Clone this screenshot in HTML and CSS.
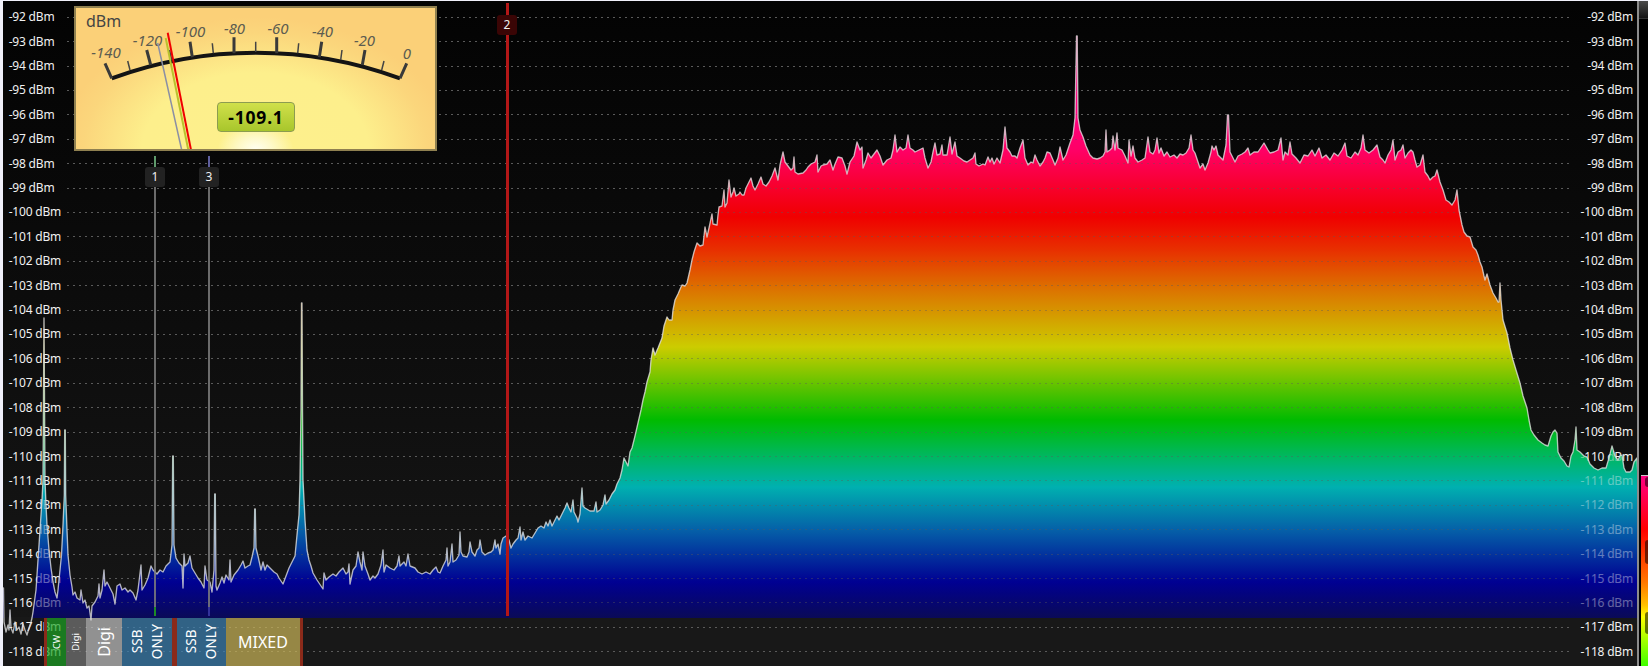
FILE: index.html
```html
<!DOCTYPE html>
<html lang="en">
<head>
<meta charset="utf-8">
<title>Spectrum</title>
<link rel="stylesheet" href="styles.css">
</head>
<body>
<div class="app">
  <main class="plot">
    <svg class="layer" viewBox="3 1 1634 665" aria-hidden="true">
      <defs>
        <linearGradient id="spectrumGradient" gradientUnits="userSpaceOnUse" x1="0" y1="0" x2="0" y2="1000">
          <stop offset="0.115" stop-color="#ff0080"/>
          <stop offset="0.150" stop-color="#ff0066"/>
          <stop offset="0.185" stop-color="#f80030"/>
          <stop offset="0.217" stop-color="#f00000"/>
          <stop offset="0.250" stop-color="#e83000"/>
          <stop offset="0.290" stop-color="#dc7400"/>
          <stop offset="0.347" stop-color="#cccc00"/>
          <stop offset="0.420" stop-color="#00bb00"/>
          <stop offset="0.450" stop-color="#00b850"/>
          <stop offset="0.487" stop-color="#00b0b0"/>
          <stop offset="0.530" stop-color="#0560a8"/>
          <stop offset="0.582" stop-color="#000092"/>
          <stop offset="0.6175" stop-color="#0a0a58"/>
          <stop offset="0.6175" stop-color="#0a0a58" stop-opacity="0"/>
        </linearGradient>
        <polygon id="spectrum" points="3.5,588 4,622 6,632 8,625 9,630 10,610 11,628 13,633 15,622 17,630 19,627 21,634 23,624 25,630 27,635 29,628 31,622 32,618 33,612 36,590 38,560 40,530 42,500 43,480 43.6,380 44,318 44.4,380 45,480 46,505 47,525 49,550 51,568 53,582 55,592 57,598 58,590 60,570 61.5,555 63,525 64.3,495 64.7,430 65.3,430 65.7,495 67,530 68,555 70,575 72,587 73,595 75,592 77,598 80,600 81,590 83,603 85,600 87,608 89,606 91,620 92,606 95,602 98,596 99,584 100,598 102,590 104,570 105,586 107,582 110,588 113,594 115,604 117,586 120,584 122,590 125,588 128,592 130,590 133,593 136,600 138,590 141,565 142,590 145,585 148,578 151,566 153,570 157,574 160,570 163,572 166,566 170,562 172,545 172.7,456 173.3,456 174,545 176,558 179,563 182,566 183,588 184,554 185,566 188,563 190,556 192,568 195,573 198,578 201,582 204,588 205,566 207,580 210,582 212,592 214,570 214.7,494 215.3,494 216,586 217,590 220,583 222,577 224,583 226,575 229,580 230,560 231,582 234,575 238,570 241,565 243,561 245,568 248,566 250,565 252,557 254,548 254.7,509 255.3,509 256,548 258,556 261,570 263,562 265,570 267,565 270,568 274,572 277,574 279,578 283,584 286,576 289,568 292,562 295,556 297,535 299,515 300,480 301,410 301.5,303 302,303 302.5,410 303,480 305,520 306,535 307,550 309,560 311,566 313,573 317,580 321,586 323,589 324,573 326,580 329,577 333,574 336,576 339,572 341,570 343,568 346,574 348,572 349,564 350,584 353,570 356,566 358,552 360,562 362,570 363,552 365,566 368,574 370,580 373,576 375,578 378,574 381,565 383,550 384,572 386,565 390,568 394,570 397,566 399,556 400,566 404,562 406,566 408,554 410,566 415,568 418,572 422,574 426,572 430,574 433,570 436,567 438,572 440,573 443,566 446,560 447,548 448,566 450,562 452,544 453,562 456,560 459,555 460,532 461,552 463,556 467,557 469,552 470,542 472,552 475,556 477,550 479,548 480,540 482,552 485,555 488,553 491,552 493,550 495,540 496,548 498,544 500,554 501,544 503,538 506,536 509,540 511,548 513,544 516,540 518,538 520,527 521,540 523,532 525,540 528,536 532,538 535,533 538,528 541,526 544,528 546,522 548,526 550,520 552,526 555,520 557,516 559,520 562,514 565,508 567,503 569,508 571,512 573,500 574,512 577,518 578,522 580,514 582,488 583,506 585,508 590,511 594,511 596,502 597,512 600,510 603,505 605,495 606,504 609,500 612,494 615,490 617,484 620,478 622,470 624,458 626,462 628,466 630,452 632,448 635,436 638,423 641,410 643,400 645,392 647,382 650,372 651,360 653,348 655,355 658,348 662,338 664,326 667,317 669,320 672,320 673,310 675,300 678,294 681,287 682,285 685,286 687,283 690,270 692,260 694,252 697,243 700,246 703,245 705,227 707,237 709,228 712,214 713,224 717,225 718,215 719,207 722,206 724,190 725,207 727,203 729,180 731,197 733,192 734,188 736,196 739,194 740,192 742,195 744,195 746,188 748,184 751,178 753,186 755,190 758,184 761,177 763,184 766,186 769,182 772,176 775,168 778,180 780,165 783,152 785,162 788,166 791,170 793,168 794,157 795,172 798,174 803,173 806,170 808,167 811,164 815,162 817,155 818,172 821,166 823,165 827,164 830,160 833,170 835,164 838,157 842,158 845,166 847,174 850,162 854,156 857,142 860,150 862,147 863,168 866,160 868,153 871,158 874,154 877,150 880,156 883,165 887,160 891,158 893,150 895,135 897,152 900,147 903,150 906,148 908,135 910,148 913,150 915,152 919,150 923,148 925,158 928,168 931,162 933,152 935,143 937,155 940,154 942,145 943,155 947,155 950,137 952,154 955,142 957,156 960,158 964,161 967,162 970,160 973,158 975,153 976,164 979,166 983,164 985,165 988,157 990,162 992,158 994,164 997,158 1000,163 1003,150 1005,127 1007,148 1010,152 1012,156 1015,156 1017,158 1020,148 1023,140 1025,158 1028,165 1031,162 1033,163 1035,155 1037,160 1040,166 1043,162 1045,158 1047,152 1050,153 1053,160 1055,165 1058,158 1060,147 1063,160 1066,155 1070,143 1073,135 1075,118 1076.5,36 1077.2,36 1078,118 1080,130 1083,137 1086,146 1090,155 1093,158 1097,159 1100,158 1103,156 1105,152 1106,130 1107,152 1110,150 1112,148 1113,136 1115,150 1117,133 1118,148 1122,150 1125,156 1128,163 1129,140 1131,156 1133,146 1135,158 1138,162 1142,160 1145,158 1148,137 1150,152 1153,154 1155,150 1157,138 1159,153 1161,148 1164,156 1167,152 1170,157 1174,155 1177,158 1180,154 1183,155 1186,153 1189,148 1191,135 1193,150 1195,153 1198,162 1200,168 1203,164 1205,170 1208,163 1211,152 1212,146 1214,150 1216,146 1218,155 1223,160 1226,145 1227.5,115 1228.5,115 1230,152 1233,158 1235,162 1238,156 1242,154 1245,152 1248,148 1250,155 1254,152 1258,152 1262,146 1264,143 1268,150 1270,153 1274,152 1278,150 1281,138 1283,160 1285,152 1288,155 1290,142 1292,154 1296,158 1300,163 1304,155 1308,156 1312,150 1315,156 1319,148 1322,158 1326,155 1330,160 1334,153 1338,156 1342,150 1345,143 1347,156 1351,158 1355,152 1358,155 1361,148 1363,135 1365,150 1369,153 1373,150 1377,145 1380,157 1383,160 1385,163 1388,155 1391,150 1393,140 1395,160 1398,152 1401,150 1403,145 1405,158 1408,153 1411,150 1413,152 1415,160 1417,167 1420,165 1423,155 1425,172 1428,176 1430,180 1433,177 1435,176 1437,170 1440,182 1443,190 1446,200 1449,202 1452,205 1455,200 1457,190 1459,210 1462,225 1464,232 1467,236 1470,237 1473,247 1476,250 1478,255 1480,262 1482,267 1484,276 1485,280 1487,274 1490,285 1493,293 1496,298 1498,302 1499,302 1500,283 1501,300 1503,320 1507,333 1510,348 1513,360 1516,370 1520,383 1523,396 1527,408 1529,420 1531,430 1534,435 1538,440 1542,443 1545,445 1548,446 1551,436 1553,432 1555,430 1557,433 1558,452 1561,458 1564,461 1567,466 1569,467 1571,456 1573,452 1575,440 1576,427 1577,450 1580,452 1584,456 1587,457 1590,464 1594,468 1598,470 1602,468 1606,468 1609,458 1612,446 1615,456 1618,460 1620,456 1622,455 1624,468 1626,472 1630,472 1632,470 1634,462 1637,458 1638,478 1650,700 -10,700"/>
      </defs>
      <use href="#spectrum" fill="url(#spectrumGradient)"/>
    </svg>

    <div class="rows">
      <div class="row"><span class="tick">-92 dBm</span><i class="grid"></i><span class="tick end">-92 dBm</span></div>
      <div class="row"><span class="tick">-93 dBm</span><i class="grid"></i><span class="tick end">-93 dBm</span></div>
      <div class="row"><span class="tick">-94 dBm</span><i class="grid"></i><span class="tick end">-94 dBm</span></div>
      <div class="row"><span class="tick">-95 dBm</span><i class="grid"></i><span class="tick end">-95 dBm</span></div>
      <div class="row"><span class="tick">-96 dBm</span><i class="grid"></i><span class="tick end">-96 dBm</span></div>
      <div class="row"><span class="tick">-97 dBm</span><i class="grid"></i><span class="tick end">-97 dBm</span></div>
      <div class="row"><span class="tick">-98 dBm</span><i class="grid"></i><span class="tick end">-98 dBm</span></div>
      <div class="row"><span class="tick">-99 dBm</span><i class="grid"></i><span class="tick end">-99 dBm</span></div>
      <div class="row"><span class="tick">-100 dBm</span><i class="grid"></i><span class="tick end">-100 dBm</span></div>
      <div class="row"><span class="tick">-101 dBm</span><i class="grid"></i><span class="tick end">-101 dBm</span></div>
      <div class="row"><span class="tick">-102 dBm</span><i class="grid"></i><span class="tick end">-102 dBm</span></div>
      <div class="row"><span class="tick">-103 dBm</span><i class="grid"></i><span class="tick end">-103 dBm</span></div>
      <div class="row"><span class="tick">-104 dBm</span><i class="grid"></i><span class="tick end">-104 dBm</span></div>
      <div class="row"><span class="tick">-105 dBm</span><i class="grid"></i><span class="tick end">-105 dBm</span></div>
      <div class="row"><span class="tick">-106 dBm</span><i class="grid"></i><span class="tick end">-106 dBm</span></div>
      <div class="row"><span class="tick">-107 dBm</span><i class="grid"></i><span class="tick end">-107 dBm</span></div>
      <div class="row"><span class="tick">-108 dBm</span><i class="grid"></i><span class="tick end">-108 dBm</span></div>
      <div class="row"><span class="tick">-109 dBm</span><i class="grid"></i><span class="tick end">-109 dBm</span></div>
      <div class="row"><span class="tick">-110 dBm</span><i class="grid"></i><span class="tick end">-110 dBm</span></div>
      <div class="row"><span class="tick">-111 dBm</span><i class="grid"></i><span class="tick end">-111 dBm</span></div>
      <div class="row"><span class="tick">-112 dBm</span><i class="grid"></i><span class="tick end">-112 dBm</span></div>
      <div class="row"><span class="tick">-113 dBm</span><i class="grid"></i><span class="tick end">-113 dBm</span></div>
      <div class="row"><span class="tick">-114 dBm</span><i class="grid"></i><span class="tick end">-114 dBm</span></div>
      <div class="row"><span class="tick">-115 dBm</span><i class="grid"></i><span class="tick end">-115 dBm</span></div>
      <div class="row"><span class="tick">-116 dBm</span><i class="grid"></i><span class="tick end">-116 dBm</span></div>
      <div class="row"><span class="tick">-117 dBm</span><i class="grid"></i><span class="tick end">-117 dBm</span></div>
      <div class="row"><span class="tick">-118 dBm</span><i class="grid"></i><span class="tick end">-118 dBm</span></div>
    </div>

    <svg class="layer" viewBox="3 1 1634 665" aria-hidden="true">
      <use href="#spectrum" fill="url(#spectrumGradient)" fill-opacity="0.6"/>
    </svg>

    <div class="bands">
      <div class="band band-edge"></div>
      <div class="band band-cw"><span class="vert cw-label">CW</span></div>
      <div class="band band-digi-s"><span class="vert digi-s-label">Digi</span></div>
      <div class="band band-digi-l"><span class="vert digi-l-label">Digi</span></div>
      <div class="band band-ssb"><span class="vert ssb-label">SSB<br>ONLY</span></div>
      <div class="band band-edge wide"></div>
      <div class="band band-ssb"><span class="vert ssb-label">SSB<br>ONLY</span></div>
      <div class="band band-mixed">MIXED</div>
      <div class="band band-edge"></div>
    </div>

    <svg class="layer" viewBox="3 1 1634 665" aria-hidden="true">
      <use class="trace" href="#spectrum"/>
    </svg>

    <div class="marker marker-1"><span class="marker-cap"></span><span class="marker-tag">1</span><span class="marker-line"></span><span class="marker-foot"></span></div>
    <div class="marker marker-3"><span class="marker-cap"></span><span class="marker-tag">3</span><span class="marker-line"></span><span class="marker-foot"></span></div>
    <div class="marker marker-2"><span class="marker-tag">2</span></div>

    <section class="meter">
      <svg class="meter-face" viewBox="76 8 359 141">
        <text class="meter-unit" x="86" y="27">dBm</text>
        <path class="scale-arc" d="M111.7 78.3 A418 418 0 0 1 400 78.3"/>
        <path class="tick-major" d="M111.7 78.3L105 63.3M150.7 65L146.7 50M192.3 57.3L190 41.7M234 53.3V37.3M276.7 53.3V37.3M319.3 57.3L321.7 41.7M362.3 65L365 50M400 78.3L406.7 63.3"/>
        <path class="tick-minor" d="M130 70L127.7 61M171.7 60L169.5 50M213.3 53.3L212.3 43.3M255.7 52V41.7M297.7 53.3L298.7 43.3M340.7 60L342 50M381.7 70L384 61"/>
        <text class="scale-num" x="106" y="58">-140</text>
        <text class="scale-num" x="147.500" y="46">-120</text>
        <text class="scale-num" x="190.500" y="37">-100</text>
        <text class="scale-num" x="234.500" y="34">-80</text>
        <text class="scale-num" x="278" y="34">-60</text>
        <text class="scale-num" x="322.500" y="37">-40</text>
        <text class="scale-num" x="364.500" y="46">-20</text>
        <text class="scale-num" x="407" y="59">0</text>
        <line class="needle needle-gray" x1="157.700" y1="43" x2="181.700" y2="150"/>
        <line class="needle needle-green" x1="165.700" y1="38" x2="188.300" y2="150"/>
        <line class="needle needle-red" x1="167.700" y1="32.700" x2="191" y2="150"/>
      </svg>
      <div class="meter-value">-109.1</div>
    </section>
  </main>
  <div class="divider"></div>
  <aside class="side">
    <div class="side-head"></div>
    <div class="colorbar">
      <span class="grip grip-top"></span>
      <span class="grip grip-mid"></span>
      <span class="grip grip-low"></span>
    </div>
  </aside>
</div>
</body>
</html>
```
FILE: styles.css
```css
* { box-sizing: border-box; margin: 0; padding: 0; }
html, body { width: 1648px; height: 666px; overflow: hidden; }
body { background: #f0f0fa; font-family: "Noto Sans", "Open Sans", sans-serif; }

.app { display: flex; height: 666px; padding: 1px 0 0 3px; }

.plot {
  position: relative;
  flex: 1;
  overflow: hidden;
  background: linear-gradient(#030303 0, #161616 616.5px, #181818 616.5px);
}

.layer { position: absolute; left: 0; top: 0; width: 1634px; height: 665px; }

.rows { position: relative; padding-top: 4px; }
.row { display: flex; align-items: center; height: 24.41px; padding-left: 5.7px; padding-right: 4px; }
.tick { flex: none; width: 58.3px; color: #f0f0f0; font-size: 12px; letter-spacing: -.2px; line-height: 14px; white-space: nowrap; }
.tick.end { width: 62px; text-align: right; }
.grid {
  flex: 1;
  height: 1px;
  background: repeating-linear-gradient(90deg, #5a5a5a 0 2px, transparent 2px 6px);
}

.trace { fill: none; stroke: #e0e0e0; stroke-opacity: .78; stroke-width: 1.35; stroke-linejoin: round; }

.bands {
  position: absolute;
  left: 41px;
  bottom: 0;
  display: flex;
  height: 48.3px;
  color: #fff;
}
.band { display: flex; align-items: center; justify-content: center; height: 100%; }
.band-edge { width: 3px; background: #8b2a1a; }
.band-edge.wide { width: 5px; }
.band-cw { width: 18.500px; background: rgba(27, 164, 36, .7); }
.band-digi-s { width: 20.500px; background: rgba(118, 118, 118, .72); }
.band-digi-l { width: 36px; background: rgba(196, 196, 196, .7); }
.band-ssb { width: 49.500px; background: rgba(60, 130, 180, .7); }
.band-mixed { width: 74px; background: rgba(204, 182, 88, .7); font-size: 16px; }
.vert { writing-mode: vertical-rl; transform: rotate(180deg); text-align: center; white-space: nowrap; }
.cw-label { font-size: 9px; }
.digi-s-label { font-size: 9.5px; }
.digi-l-label { font-size: 16px; }
.ssb-label { font-size: 13.5px; line-height: 20px; }

.marker { position: absolute; display: flex; flex-direction: column; align-items: center; width: 20px; }
.marker-1 { left: 142px; top: 155px; height: 460px; }
.marker-3 { left: 196px; top: 155px; height: 460px; }
.marker-cap { width: 2.5px; height: 11px; }
.marker-1 .marker-cap { background: #5f9a6c; }
.marker-3 .marker-cap { background: #5f5f9e; }
.marker-tag {
  flex: none;
  width: 20px;
  height: 20px;
  border-radius: 3px;
  background: #222;
  color: #f0f0f0;
  font-size: 12px;
  line-height: 20px;
  text-align: center;
}
.marker-line { flex: 1; width: 2.5px; background: rgba(125, 125, 125, .85); }
.marker-foot { width: 2.5px; height: 9px; }
.marker-1 .marker-foot { background: #1d8a26; }
.marker-3 .marker-foot { background: #32329a; }

.marker-2 { left: 494px; top: 2px; height: 613px; background: linear-gradient(#b31717, #b31717) center / 3px 100% no-repeat; padding-top: 12px; }
.marker-2 .marker-tag { background: #3a0505; }

.meter {
  position: absolute;
  left: 71px;
  top: 5px;
  width: 363px;
  height: 145px;
  border: 2px solid #8f8050;
  background:
    radial-gradient(ellipse 38px 26px at 50% 100%, #fffff0 0, rgba(255, 252, 220, .75) 45%, rgba(255, 250, 200, 0) 100%),
    radial-gradient(ellipse 195px 132px at 50% 100%, #fdf08c 0, #fdef8c 58%, #fbd67c 88%, #fbd078 100%),
    #fbd078;
}
.meter-face { display: block; width: 359px; height: 141px; }
.meter-unit { fill: #444; font-size: 16px; }
.scale-arc { fill: none; stroke: #141414; stroke-width: 4; }
.tick-major { fill: none; stroke: #3a3a3a; stroke-width: 3; }
.tick-minor { fill: none; stroke: #444; stroke-width: 1.5; }
.scale-num { fill: #5c5c50; font-size: 15px; font-style: italic; text-anchor: middle; }
.needle { stroke-linecap: butt; }
.needle-gray { stroke: #8b8fa4; stroke-width: 1.5; }
.needle-green { stroke: #b9c22e; stroke-width: 2; }
.needle-red { stroke: #f00000; stroke-width: 2; }

.meter-value {
  position: absolute;
  left: 141px;
  top: 94px;
  width: 78px;
  height: 30px;
  border: 1px solid #8c9c50;
  border-radius: 4px;
  background: linear-gradient(#d0e04a, #a8c62c);
  color: #000;
  font-size: 17.5px;
  font-weight: 700;
  letter-spacing: .8px;
  line-height: 28px;
  text-align: center;
}

.divider { flex: none; width: 2px; background: #8c8c8c; }

.side { flex: none; display: flex; flex-direction: column; width: 9px; background: #000; }
.side-head { height: 18px; background: linear-gradient(#4a4a4a, #141414); border-bottom: 1px solid #333; }
.colorbar {
  position: relative;
  flex: none;
  margin: auto 0 0 2px;
  height: 191px;
  border-top: 1px solid #c8c8c8;
  background: linear-gradient(#ff0080 0, #ff0060 8%, #ff0000 28%, #ff7800 56%, #ffc000 68%, #ffff00 74%, #40ff00 100%);
}
.grip { position: absolute; right: 0; width: 3px; border-radius: 3px 0 0 3px; background: rgba(0, 0, 0, .55); }
.grip-top { top: 1px; height: 10px; }
.grip-mid { top: 64px; height: 24px; }
.grip-low { top: 136px; height: 22px; }
```
